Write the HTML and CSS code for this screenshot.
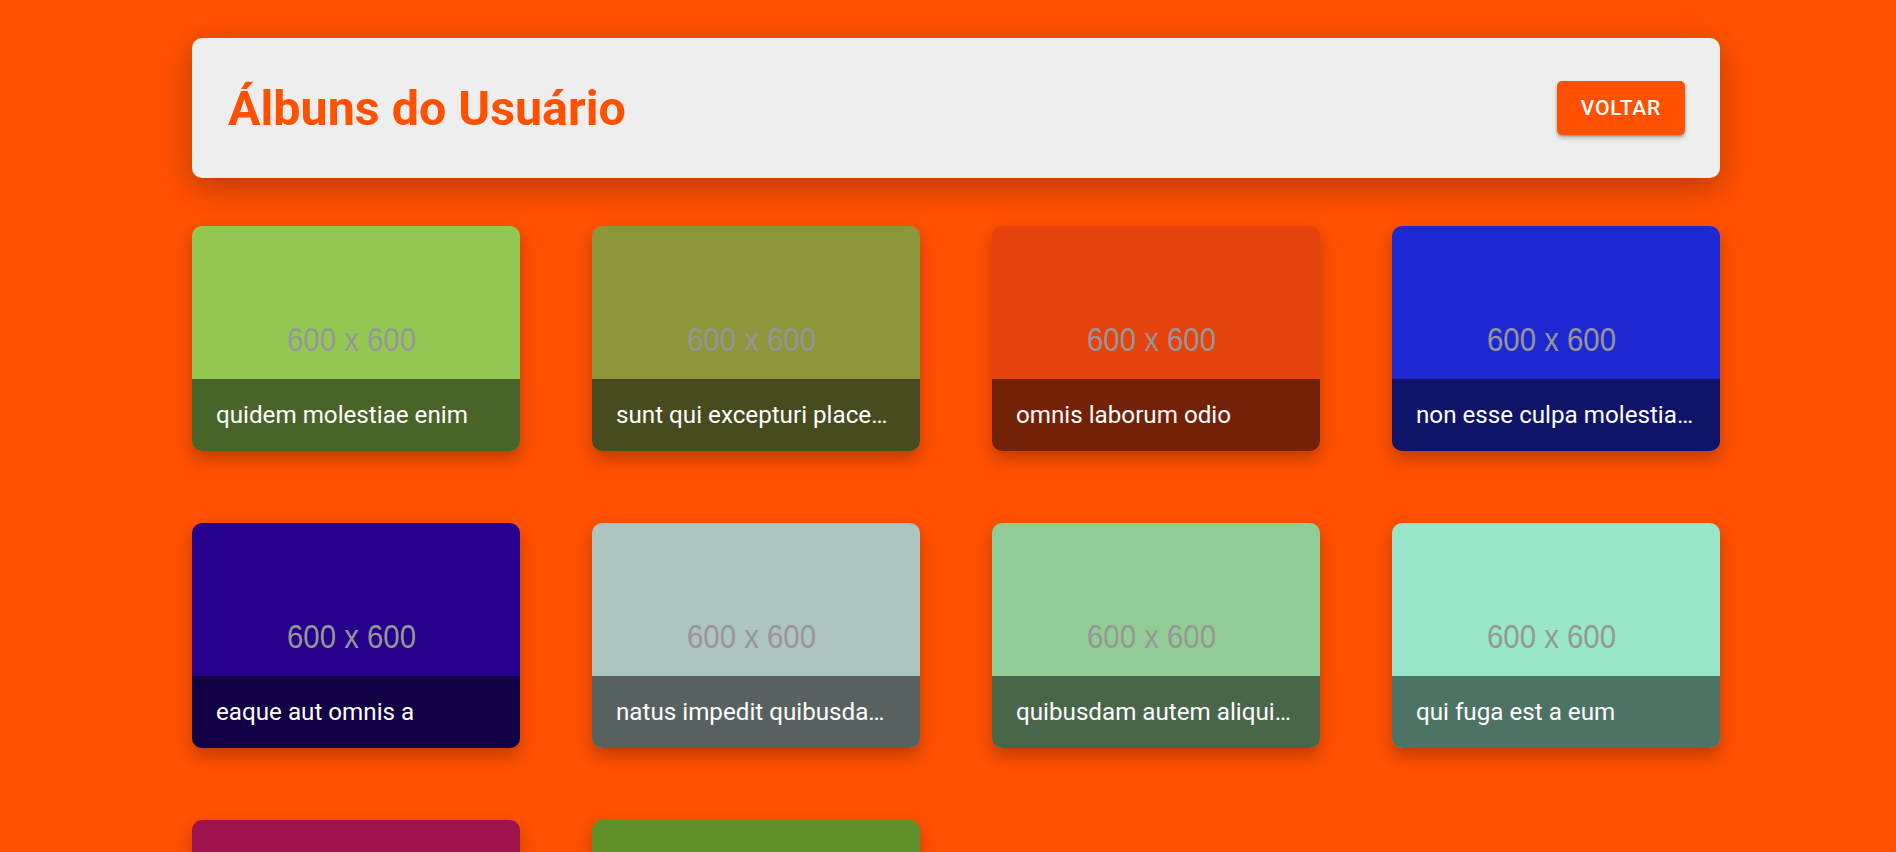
FILE: index.html
```html
<!DOCTYPE html>
<html lang="pt-BR">
<head>
<meta charset="utf-8">
<title>Álbuns do Usuário</title>
<link rel="stylesheet" href="styles.css">
</head>
<body>
<div class="page">
  <header class="header">
    <h1 class="title">Álbuns do Usuário</h1>
    <button class="btn">VOLTAR</button>
  </header>
  <main class="grid">
    <div class="card"><div class="thumb" style="background:#93c953"><span class="ph">600 x 600</span></div><div class="caption">quidem molestiae enim</div></div>
    <div class="card"><div class="thumb" style="background:#8e963c"><span class="ph">600 x 600</span></div><div class="caption">sunt qui excepturi placeat culpa</div></div>
    <div class="card"><div class="thumb" style="background:#e6420e"><span class="ph">600 x 600</span></div><div class="caption">omnis laborum odio</div></div>
    <div class="card"><div class="thumb" style="background:#1e28d2"><span class="ph">600 x 600</span></div><div class="caption">non esse culpa molestiae omnis sed optio</div></div>
    <div class="card"><div class="thumb" style="background:#25008b"><span class="ph">600 x 600</span></div><div class="caption">eaque aut omnis a</div></div>
    <div class="card"><div class="thumb" style="background:#aec4c0"><span class="ph">600 x 600</span></div><div class="caption">natus impedit quibusdam illo est</div></div>
    <div class="card"><div class="thumb" style="background:#92cc96"><span class="ph">600 x 600</span></div><div class="caption">quibusdam autem aliquid et et quia</div></div>
    <div class="card"><div class="thumb" style="background:#99e6c8"><span class="ph">600 x 600</span></div><div class="caption">qui fuga est a eum</div></div>
    <div class="card"><div class="thumb" style="background:#9e134b"><span class="ph">600 x 600</span></div><div class="caption">saepe unde necessitatibus rem</div></div>
    <div class="card"><div class="thumb" style="background:#5e912c"><span class="ph">600 x 600</span></div><div class="caption">distinctio laborum qui</div></div>
  </main>
</div>
</body>
</html>
```
FILE: styles.css
```css
* { box-sizing: border-box; }
html, body { margin: 0; padding: 0; }
body {
  background: #ff5100;
  font-family: Roboto, "Liberation Sans", Arial, sans-serif;
  overflow: hidden;
  height: 852px;
}
.page {
  width: 1528px;
  margin-left: 192px;
  padding-top: 38px;
}
.header {
  height: 140px;
  background: #eeeeee;
  border-radius: 10px;
  box-shadow: 0 10px 30px rgba(0, 0, 0, 0.28);
  display: flex;
  align-items: center;
  justify-content: space-between;
  padding: 0 35px 0 36px;
}
.title {
  margin: 0;
  color: #ff5100;
  font-size: 48.4px;
  font-weight: 700;
  line-height: 1;
  padding-top: 2px;
}
.btn {
  background: #ff5100;
  color: #ffffff;
  border: none;
  border-radius: 5px;
  height: 54px;
  padding: 0 24px;
  font-family: Roboto, "Liberation Sans", Arial, sans-serif;
  font-size: 21px;
  font-weight: 500;
  letter-spacing: 0.75px;
  box-shadow: 0 3px 4px rgba(0, 0, 0, 0.25), 0 1px 2px rgba(0, 0, 0, 0.2);
}
.grid {
  margin-top: 48px;
  display: grid;
  grid-template-columns: repeat(4, 328px);
  column-gap: 72px;
  row-gap: 72px;
}
.card {
  position: relative;
  height: 225px;
  border-radius: 10px;
  overflow: hidden;
  box-shadow: 0 8px 16px rgba(0, 0, 0, 0.25);
}
.thumb {
  height: 100%;
  display: flex;
  align-items: center;
  justify-content: center;
}
.ph {
  color: #969696;
  font-family: "Liberation Sans", Arial, sans-serif;
  font-size: 33px;
  transform: scaleX(0.89);
  display: inline-block;
  margin-top: 2px;
  margin-right: 10px;
}
.caption {
  position: absolute;
  left: 0;
  right: 0;
  bottom: 0;
  height: 72px;
  background: rgba(0, 0, 0, 0.5);
  color: #ffffff;
  font-size: 24.2px;
  line-height: 72px;
  padding: 0 24px;
  white-space: nowrap;
  overflow: hidden;
  text-overflow: ellipsis;
}
```
